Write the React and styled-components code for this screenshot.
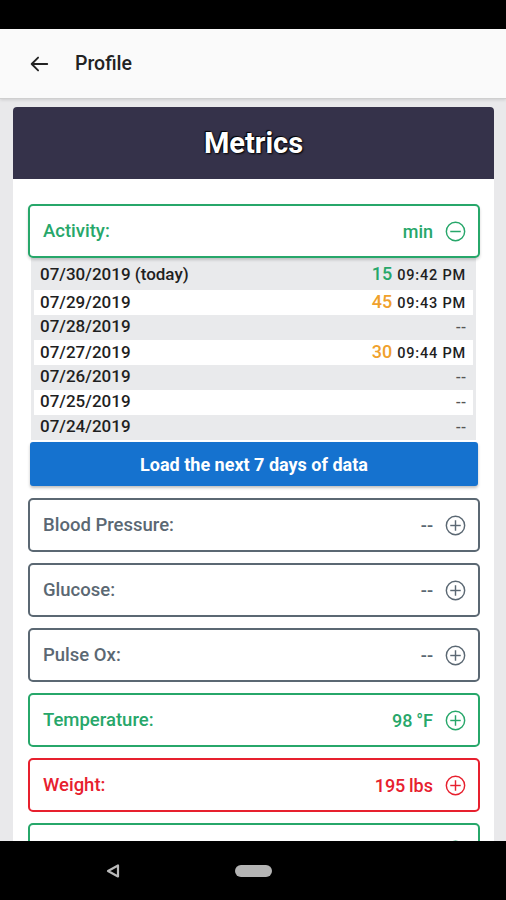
import React from "react";
import styled, { createGlobalStyle } from "styled-components";

const GlobalStyle = createGlobalStyle`
  html, body {
    margin: 0;
    padding: 0;
    background: #e9e9eb;
    font-family: Roboto, "Noto Sans", "Liberation Sans", sans-serif;
  }
  * { box-sizing: border-box; }
`;

const COLORS = {
  green: "#27a76a",
  gray: "#5b6873",
  red: "#e7202e",
  orange: "#f0a12c",
};

const history = [
  { date: "07/30/2019 (today)", value: "15", tone: "green", time: "09:42 PM" },
  { date: "07/29/2019", value: "45", tone: "orange", time: "09:43 PM" },
  { date: "07/28/2019" },
  { date: "07/27/2019", value: "30", tone: "orange", time: "09:44 PM" },
  { date: "07/26/2019" },
  { date: "07/25/2019" },
  { date: "07/24/2019" },
];

const metrics = [
  { label: "Blood Pressure:", value: "--", tone: "gray" },
  { label: "Glucose:", value: "--", tone: "gray" },
  { label: "Pulse Ox:", value: "--", tone: "gray" },
  { label: "Temperature:", value: "98\u2009°F", tone: "green" },
  { label: "Weight:", value: "195\u2009lbs", tone: "red" },
  { label: "", value: "", tone: "green" },
];

const CircleIcon = ({ plus }) => (
  <svg width="21" height="21" viewBox="0 0 22 22" fill="none">
    <circle cx="11" cy="11" r="9.6" stroke="currentColor" strokeWidth="1.5" />
    <path d="M5.5 11h11" stroke="currentColor" strokeWidth="1.5" />
    {plus && <path d="M11 5.5v11" stroke="currentColor" strokeWidth="1.5" />}
  </svg>
);

const App = () => {
  return (
    <Screen>
      <GlobalStyle />
      <StatusBar />
      <Header>
        <svg width="22" height="22" viewBox="0 0 24 24" fill="none">
          <path
            d="M21 12H4M11 5l-7 7 7 7"
            stroke="#222"
            strokeWidth="2"
            strokeLinecap="round"
            strokeLinejoin="round"
          />
        </svg>
        <HeaderTitle>Profile</HeaderTitle>
      </Header>
      <Content>
        <Card>
          <CardHead>
            <h1>Metrics</h1>
          </CardHead>
          <CardBody>
            <MetricBox tone="green" raised>
              <Label>Activity:</Label>
              <Value>min</Value>
              <CircleIcon />
            </MetricBox>
            <History>
              {history.map((row, i) => (
                <Row key={row.date} shaded={i % 2 === 0} first={i === 0}>
                  <DateText>{row.date}</DateText>
                  {row.value ? (
                    <span>
                      <Amount tone={row.tone}>{row.value}</Amount>
                      <Time>{row.time}</Time>
                    </span>
                  ) : (
                    <Dash>--</Dash>
                  )}
                </Row>
              ))}
            </History>
            <LoadButton>Load the next 7 days of data</LoadButton>
            <MetricList>
              {metrics.map((m, i) => (
                <MetricBox key={i} tone={m.tone}>
                  <Label>{m.label}</Label>
                  <Value>{m.value}</Value>
                  <CircleIcon plus />
                </MetricBox>
              ))}
            </MetricList>
          </CardBody>
        </Card>
      </Content>
      <NavBar>
        <svg width="16" height="16" viewBox="0 0 16 16" fill="none">
          <path
            d="M13 2.5v11L3 8z"
            stroke="#b9b9b9"
            strokeWidth="2.2"
            strokeLinejoin="round"
          />
        </svg>
        <HomePill />
      </NavBar>
    </Screen>
  );
};

const Screen = styled.div`
  height: 900px;
  display: flex;
  flex-direction: column;
  overflow: hidden;
`;

const StatusBar = styled.div`
  height: 29px;
  flex-shrink: 0;
  background: #000;
`;

const Header = styled.div`
  height: 70px;
  flex-shrink: 0;
  display: flex;
  align-items: center;
  gap: 25px;
  padding: 0 0 0 28px;
  background: #fafafa;
  border-bottom: 1px solid #cfcfcf;
  box-shadow: 0 1px 3px rgba(0, 0, 0, 0.12);
  position: relative;
  z-index: 1;
`;

const HeaderTitle = styled.span`
  font-size: 19.5px;
  font-weight: 500;
  color: #222;
`;

const Content = styled.div`
  flex: 1;
  overflow: hidden;
  padding: 8px 12px 0 13px;
`;

const Card = styled.div`
  background: #fff;
  border-radius: 4px 4px 0 0;
  overflow: hidden;
  min-height: 100%;
`;

const CardHead = styled.div`
  height: 72px;
  display: flex;
  align-items: center;
  justify-content: center;
  background: #35324a;
  h1 {
    margin: 0;
    font-size: 29px;
    font-weight: 700;
    color: #fff;
    text-shadow: 1px 1px 2px #000, -1px -1px 1px #000;
  }
`;

const CardBody = styled.div`
  padding: 25px 14px 0 15px;
`;

const MetricBox = styled.div`
  height: 54px;
  display: flex;
  align-items: center;
  gap: 12px;
  padding: 0 12px 0 13px;
  border: 2px solid ${(p) => COLORS[p.tone]};
  border-radius: 5px;
  color: ${(p) => COLORS[p.tone]};
  background: #fff;
  box-shadow: ${(p) => (p.raised ? "0 2px 3px rgba(0,0,0,0.18)" : "none")};
  position: relative;
`;

const Label = styled.span`
  flex: 1;
  font-size: 18.5px;
  font-weight: 500;
`;

const Value = styled.span`
  font-size: 18px;
  font-weight: 500;
`;

const History = styled.div`
  margin: 0 4px 0 3px;
  padding: 4px 3px 0;
  background: #e9eaec;
`;

const Row = styled.div`
  height: ${(p) => (p.first ? "28px" : "25px")};
  display: flex;
  align-items: baseline;
  justify-content: space-between;
  padding: 1px 7px 0 6px;
  background: ${(p) => (p.shaded ? "transparent" : "#fff")};
`;

const DateText = styled.span`
  font-size: 17px;
  font-weight: 500;
  color: #1f1f1f;
`;

const Amount = styled.span`
  font-size: 18px;
  font-weight: 500;
  color: ${(p) => COLORS[p.tone]};
  margin-right: 5px;
`;

const Time = styled.span`
  font-size: 14.5px;
  font-weight: 500;
  color: #1f1f1f;
  letter-spacing: 0.8px;
`;

const Dash = styled.span`
  font-size: 15px;
  font-weight: 500;
  color: #555;
`;

const LoadButton = styled.button`
  display: block;
  width: calc(100% - 4px);
  height: 44px;
  margin: 2px 2px 0;
  border: none;
  border-radius: 3px;
  background: #1572cf;
  color: #fff;
  font-family: inherit;
  font-size: 18px;
  font-weight: 700;
  box-shadow: 0 2px 3px rgba(0, 0, 0, 0.25);
`;

const MetricList = styled.div`
  display: flex;
  flex-direction: column;
  gap: 11px;
  margin-top: 12px;
`;

const NavBar = styled.div`
  height: 59px;
  flex-shrink: 0;
  background: #000;
  display: flex;
  align-items: center;
  padding: 0 0 0 105px;
  gap: 114px;
`;

const HomePill = styled.div`
  width: 37px;
  height: 12px;
  border-radius: 6px;
  background: #b4b4b4;
`;

export default App;
